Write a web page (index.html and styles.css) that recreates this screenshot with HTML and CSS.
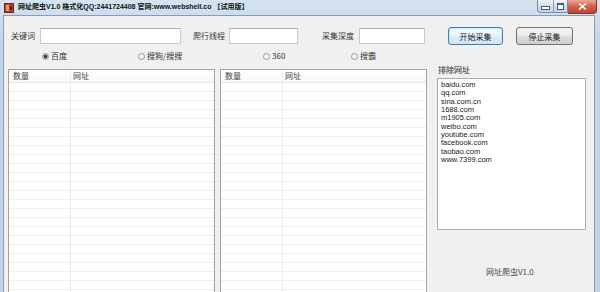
FILE: index.html
```html
<!DOCTYPE html>
<html>
<head>
    <title>网址爬虫V1.0</title>
    <link rel="stylesheet" href="styles.css">
</head>
<body>
    <div class="window">
        <div class="titlebar">
            <svg class="app-icon" width="10" height="10" viewBox="0 0 10 10">
                <rect x="0" y="0" width="10" height="10" fill="#7a1f14"/>
                <rect x="1" y="1" width="8" height="8" fill="#b8402a"/>
                <rect x="2" y="2" width="3" height="6" fill="#e0a15a"/>
                <rect x="6" y="3" width="2" height="4" fill="#5a140c"/>
            </svg>
            <span class="title">网址爬虫V1.0 格式化QQ:2441724408 官网:www.webshell.co 【试用版】</span>
            <div class="caption-btns">
                <div class="cap-group">
                    <span class="cap-btn cap-min"><i></i></span>
                    <span class="cap-btn cap-max"><i></i></span>
                </div>
                <span class="cap-close">
                    <svg width="9" height="7" viewBox="0 0 9 7">
                        <path d="M1 0.5 L8 6.5 M8 0.5 L1 6.5" stroke="#fff" stroke-width="1.6"/>
                    </svg>
                </span>
            </div>
        </div>

        <div class="client">
            <div class="row-inputs">
                <label class="lbl lbl-key">关键词</label>
                <input type="text" class="txt txt-key">
                <label class="lbl lbl-thread">爬行线程</label>
                <input type="text" class="txt txt-thread">
                <label class="lbl lbl-depth">采集深度</label>
                <input type="text" class="txt txt-depth">
                <button class="btn btn-default btn-start">开始采集</button>
                <button class="btn btn-stop">停止采集</button>
            </div>

            <div class="row-engines">
                <label class="engine e-baidu"><span class="radio checked"></span>百度</label>
                <label class="engine e-sogou"><span class="radio"></span>搜狗/搜搜</label>
                <label class="engine e-360"><span class="radio"></span>360</label>
                <label class="engine e-soba"><span class="radio"></span>搜霸</label>
            </div>

            <div class="main">
                <div class="list">
                    <div class="list-head">
                        <div class="col-num">数量</div>
                        <div class="col-url">网址</div>
                    </div>
                    <div class="list-body">
                        <div class="col-num"></div>
                        <div class="col-url"></div>
                    </div>
                </div>

                <div class="list list-second">
                    <div class="list-head">
                        <div class="col-num">数量</div>
                        <div class="col-url">网址</div>
                    </div>
                    <div class="list-body">
                        <div class="col-num"></div>
                        <div class="col-url"></div>
                    </div>
                </div>

                <div class="side">
                    <div class="side-label">排除网址</div>
                    <div class="exclude-box">
                        <div>baidu.com</div>
                        <div>qq.com</div>
                        <div>sina.com.cn</div>
                        <div>1688.com</div>
                        <div>m1905.com</div>
                        <div>weibo.com</div>
                        <div>youtube.com</div>
                        <div>facebook.com</div>
                        <div>taobao.com</div>
                        <div>www.7399.com</div>
                    </div>
                    <div class="version">网址爬虫V1.0</div>
                </div>
            </div>
        </div>
    </div>
</body>
</html>
```

FILE: styles.css
```css
body {
    margin: 0;
    width: 600px;
    height: 292px;
    overflow: hidden;
    font-family: "Noto Sans CJK SC", "Liberation Sans", sans-serif;
    font-size: 8px;
    color: #333;
    background: #c6d8ec;
}
.window {
    display: flex;
    flex-direction: column;
    height: 292px;
    background: linear-gradient(to bottom, #d6e3f1, #c2d5ea 40px, #c0d3e9);
}

/* title bar */
.titlebar {
    height: 15px;
    display: flex;
    align-items: flex-start;
    padding-left: 4px;
    flex-shrink: 0;
}
.app-icon {
    margin-top: 3px;
}
.title {
    margin-left: 4px;
    margin-top: 2px;
    font-family: "Liberation Sans", "Noto Sans CJK SC", sans-serif;
    font-weight: bold;
    font-size: 7px;
    line-height: 10px;
    color: #111;
    white-space: nowrap;
}
.caption-btns {
    margin-left: auto;
    margin-right: 3px;
    display: flex;
}
.cap-group {
    display: flex;
    height: 12px;
    border: 1px solid #7c8ea6;
    border-top: none;
    border-radius: 0 0 0 4px;
    background: linear-gradient(to bottom, #eef3f9, #d3dfec 50%, #c4d3e4);
}
.cap-btn {
    width: 13px;
    display: flex;
    align-items: center;
    justify-content: center;
}
.cap-min {
    width: 15px;
    border-right: 1px solid #8ea0b7;
}
.cap-min i {
    width: 7px;
    height: 2px;
    margin-top: 3px;
    border: 1px solid #4a5a70;
    background: #fff;
}
.cap-max i {
    width: 5px;
    height: 4px;
    border: 1px solid #4a5a70;
    border-top-width: 2px;
    background: #fff;
}
.cap-close {
    width: 28px;
    height: 13px;
    display: flex;
    align-items: center;
    justify-content: center;
    border: 1px solid #7a3b33;
    border-top: none;
    border-left: none;
    border-radius: 0 0 4px 0;
    background: linear-gradient(to bottom, #e8a898, #d4624c 50%, #c2432c);
}

/* client area */
.client {
    flex: 1;
    margin: 0 5px 0 3px;
    border: 1px solid #8a9bb2;
    border-bottom: none;
    background: #f0f0f0;
    overflow: hidden;
}
.row-inputs {
    display: flex;
    align-items: center;
    height: 18px;
    margin-top: 11px;
    padding-left: 7px;
}
.lbl {
    white-space: nowrap;
    line-height: 10px;
}
.lbl-key {
    width: 24px;
    margin-right: 5px;
}
.lbl-thread {
    width: 32px;
    margin-left: 12px;
    margin-right: 4px;
}
.lbl-depth {
    width: 32px;
    margin-left: 24px;
    margin-right: 5px;
}
.txt {
    box-sizing: border-box;
    height: 16px;
    margin: 0;
    padding: 0 2px;
    border: 1px solid #c5cad1;
    border-top-color: #abadb3;
    background: #fff;
}
.txt-key {
    width: 141px;
}
.txt-thread {
    width: 69px;
}
.txt-depth {
    width: 66px;
}
.btn {
    box-sizing: border-box;
    height: 18px;
    padding: 0;
    font-family: "Noto Sans CJK SC", sans-serif;
    font-size: 8px;
    color: #222;
    border: 1px solid #707070;
    border-radius: 3px;
    background: linear-gradient(to bottom, #f2f2f2, #ebebeb 50%, #dddddd 50%, #cfcfcf);
}
.btn-start {
    width: 55px;
    margin-left: 23px;
}
.btn-default {
    border-color: #3c7fb1;
    box-shadow: inset 0 0 0 1px #c8e6f8;
    background: linear-gradient(to bottom, #f4f9fd, #e9f3fb 50%, #dcecf8 50%, #d0e5f5);
}
.btn-stop {
    width: 57px;
    margin-left: 13px;
}

/* search engine radios */
.row-engines {
    display: flex;
    align-items: center;
    height: 10px;
    margin-top: 6px;
    padding-left: 38px;
}
.engine {
    display: flex;
    align-items: center;
    line-height: 10px;
    color: #333;
}
.e-baidu {
    width: 96px;
}
.e-sogou {
    width: 125px;
}
.e-360 {
    width: 88px;
}
.radio {
    box-sizing: border-box;
    width: 7px;
    height: 7px;
    margin-right: 2px;
    border: 1px solid #9a9a9a;
    border-radius: 50%;
    background: radial-gradient(circle, #ffffff, #e6e6e6);
}
.radio.checked {
    background: radial-gradient(circle, #2a3f5a 0 1.6px, #9fb3c8 2px, #e8eef4 3px);
}

/* lists */
.main {
    display: flex;
    margin-top: 4px;
    padding-left: 4px;
}
.list {
    box-sizing: border-box;
    width: 207px;
    height: 240px;
    margin-top: 4px;
    border: 1px solid #a3a3a3;
    background: #fff;
    display: flex;
    flex-direction: column;
}
.list-second {
    margin-left: 5px;
}
.list-head {
    display: flex;
    height: 12px;
    line-height: 11px;
    border-bottom: 1px solid #e5e5e5;
    background: linear-gradient(to bottom, #ffffff, #f7f8fa);
    color: #444;
}
.list-head .col-num {
    padding-left: 4px;
}
.list-head .col-url {
    padding-left: 2px;
}
.col-num {
    box-sizing: border-box;
    width: 62px;
    border-right: 1px solid #ececec;
}
.col-url {
    flex: 1;
}
.list-body {
    flex: 1;
    display: flex;
    background: repeating-linear-gradient(to bottom, #ffffff 0 8px, #eeeeee 8px 9px);
}

/* exclude panel */
.side {
    width: 149px;
    margin-left: 10px;
}
.side-label {
    padding-left: 1px;
    line-height: 9px;
    color: #222;
}
.exclude-box {
    box-sizing: border-box;
    height: 152px;
    margin-top: 4px;
    padding: 2px 3px;
    border: 1px solid #abadb3;
    background: #fff;
    font-family: "Liberation Sans", sans-serif;
    font-size: 7.5px;
    line-height: 8.35px;
    color: #222;
}
.version {
    margin-top: 37px;
    padding-left: 49px;
    line-height: 10px;
    color: #444;
}
```
